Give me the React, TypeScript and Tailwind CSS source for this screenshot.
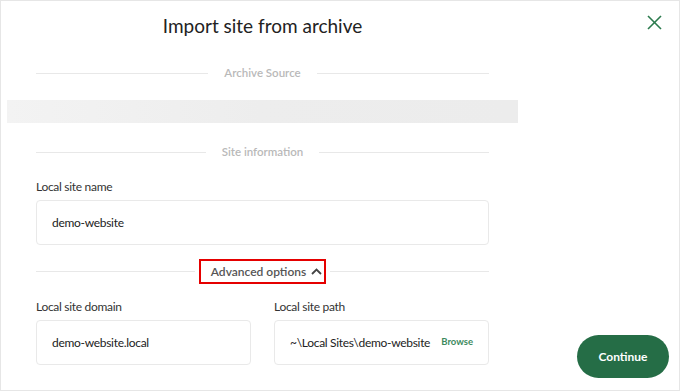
// Section divider with a centered caption
function Divider({ label }: { label: string }) {
  return (
    <div className="flex items-center h-4">
      <div className="flex-1 h-px bg-[#e8e8e8]" />
      <span className="px-4 text-[11.5px] leading-4 font-semibold text-[#b9b9b9]">{label}</span>
      <div className="flex-1 h-px bg-[#e8e8e8]" />
    </div>
  );
}

function Field({ label, value, browse }: { label: string; value: string; browse?: boolean }) {
  return (
    <div className="flex flex-col">
      <label className="text-[12px] leading-[18px] tracking-[-0.3px] text-[#333]">{label}</label>
      <div className="mt-[4px] h-[45px] rounded-[4px] border border-[#e9e9e9] bg-white px-[15px] flex items-center justify-between">
        <span className="text-[12px] tracking-[-0.3px] text-[#222] whitespace-nowrap">{value}</span>
        {browse && <span className="text-[9.5px] font-bold text-[#3d8a5e]">Browse</span>}
      </div>
    </div>
  );
}

export default function App() {
  return (
    <div
      className="w-[680px] h-[391px] bg-white border border-[#e6e6e6] flex"
      style={{ fontFamily: 'Lato, "Open Sans", sans-serif' }}
    >
      {/* Main form column */}
      <div className="w-[453px] ml-[35px] flex flex-col">
        <h1 className="mt-[11px] text-[19px] leading-[28px] text-[#222] text-center">Import site from archive</h1>

        <div className="mt-[25px]">
          <Divider label="Archive Source" />
        </div>

        {/* Blurred archive drop area */}
        <div className="mt-[19px] -mx-[29px] h-[23px] bg-gradient-to-r from-[#f3f3f3] via-[#ededed] to-[#ececec]" />

        <div className="mt-[21px]">
          <Divider label="Site information" />
        </div>

        <div className="mt-[18px]">
          <Field label="Local site name" value="demo-website" />
        </div>

        <div className="mt-[14px] flex items-center">
          <div className="flex-1 h-px bg-[#e8e8e8]" />
          <div className="mx-1 h-[25px] border-2 border-[#e50000] pl-[10px] pr-[2px] flex items-center gap-[5px]">
            <span className="text-[12px] font-semibold text-[#555]">Advanced options</span>
            <svg width="11" height="7" viewBox="0 0 11 7" fill="none" stroke="#444" strokeWidth="1.8">
              <polyline points="1,6 5.5,1.5 10,6" />
            </svg>
          </div>
          <div className="flex-1 h-px bg-[#e8e8e8]" />
        </div>

        <div className="mt-[14px] grid grid-cols-2 gap-[23px]">
          <Field label="Local site domain" value="demo-website.local" />
          <Field label="Local site path" value="~\Local Sites\demo-website" browse />
        </div>
      </div>

      {/* Right side: close and continue */}
      <div className="flex-1 flex flex-col items-end justify-between pt-[14px] pb-[12px] pr-[10px]">
        <button className="mr-[7px] text-[#2b7a4d]">
          <svg width="15" height="15" viewBox="0 0 15 15" fill="none" stroke="currentColor" strokeWidth="1.6">
            <line x1="1" y1="1" x2="14" y2="14" />
            <line x1="14" y1="1" x2="1" y2="14" />
          </svg>
        </button>
        <button className="w-[92px] h-[43px] rounded-full bg-[#256d46] text-white text-[12px] font-bold">
          Continue
        </button>
      </div>
    </div>
  );
}
